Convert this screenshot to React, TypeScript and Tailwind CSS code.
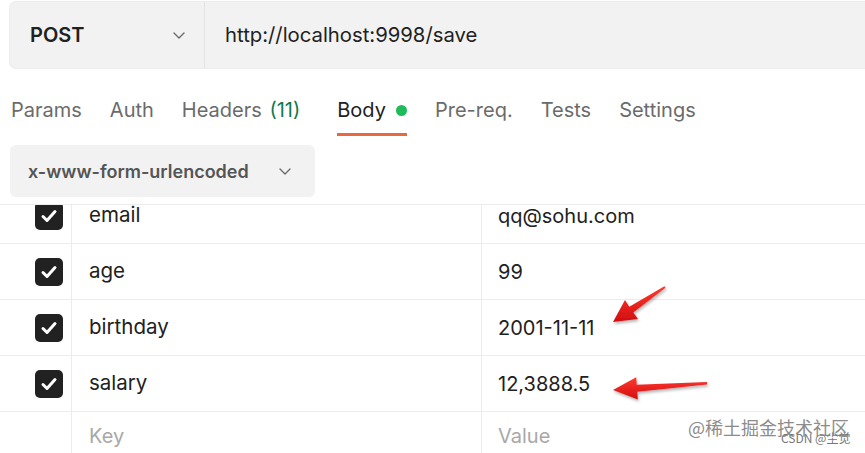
const rows = [
  { key: 'email', value: 'qq@sohu.com' },
  { key: 'age', value: '99' },
  { key: 'birthday', value: '2001-11-11' },
  { key: 'salary', value: '12,3888.5' },
]

const tabs = ['Params', 'Auth', 'Headers', 'Body', 'Pre-req.', 'Tests', 'Settings']

const Chevron = ({ className }: { className?: string }) => (
  <svg className={className} width="16" height="16" viewBox="0 0 16 16" fill="none">
    <path d="M3 6l5 5 5-5" stroke="#6b6b6b" strokeWidth="1.4" strokeLinecap="round" strokeLinejoin="round" />
  </svg>
)

const Checkbox = () => (
  <div className="w-[28px] h-[28px] rounded-[5px] bg-[#212121] flex items-center justify-center">
    <svg width="20" height="20" viewBox="0 0 20 20" fill="none">
      <path d="M4 10.5l4 4 8-9" stroke="#fff" strokeWidth="3" strokeLinecap="round" strokeLinejoin="round" />
    </svg>
  </div>
)

const Arrows = () => (
  <svg className="absolute inset-0 pointer-events-none" width="865" height="453">
    <defs>
      <linearGradient id="red" x1="0" y1="0" x2="0" y2="1">
        <stop offset="0" stopColor="#ff3a30" />
        <stop offset="1" stopColor="#d10d0d" />
      </linearGradient>
      <filter id="sh" x="-20%" y="-20%" width="140%" height="140%">
        <feDropShadow dx="1" dy="2" stdDeviation="1.5" floodColor="#000" floodOpacity="0.3" />
      </filter>
    </defs>
    <polygon
      points="613,322 625,300 629.3,306.8 664.4,286.2 665.6,287.8 633.3,312.6 638,319"
      fill="url(#red)"
      filter="url(#sh)"
    />
    <polygon
      points="613,390 636.2,377.2 636.7,384.7 707,382 707,384.5 637.3,391.7 637.8,399.5"
      fill="url(#red)"
      filter="url(#sh)"
    />
  </svg>
)

export default function App() {
  return (
    <div className="relative w-[865px] h-[453px] overflow-hidden bg-white font-['Inter','Liberation_Sans',sans-serif] text-[#212121]">
      {/* request bar */}
      <div className="pt-[2px] pl-[10px]">
        <div className="flex h-[66px] bg-[#f2f2f2] rounded-l-[6px] shadow-[0_0_0_1px_#ececec]">
          <div className="w-[195px] flex items-center justify-between pl-[20px] pr-[17px] border-r border-[#e2e2e2]">
            <span className="text-[20px] font-semibold">POST</span>
            <Chevron />
          </div>
          <div className="flex items-center pl-[20px] text-[20.3px]">http://localhost:9998/save</div>
        </div>
      </div>

      {/* tabs */}
      <div className="flex gap-[28px] pl-[11px] mt-[28px]">
        {tabs.map((t) => (
          <div key={t} className="flex flex-col">
            <div className="h-[28px] flex items-center text-[20px] leading-[28px]">
              {t === 'Headers' ? (
                <span className="text-[#6b6b6b] mr-[9px]">
                  Headers <span className="text-[#0f7b4a] ml-[2px]">(11)</span>
                </span>
              ) : t === 'Body' ? (
                <span className="flex items-center">
                  Body
                  <span className="ml-[10px] w-[11px] h-[11px] rounded-full bg-[#1fba5b]" />
                </span>
              ) : (
                <span className="text-[#6b6b6b]">{t}</span>
              )}
            </div>
            <div className={'mt-[9px] h-[3px] ' + (t === 'Body' ? 'bg-[#e8693f]' : '')} />
          </div>
        ))}
      </div>

      {/* body type */}
      <div className="pl-[10px] mt-[9px]">
        <div className="w-[305px] h-[52px] bg-[#f2f2f2] rounded-[6px] flex items-center justify-between pl-[18px] pr-[22px]">
          <span className="text-[18px] font-semibold text-[#555]">x-www-form-urlencoded</span>
          <Chevron />
        </div>
      </div>

      {/* params table */}
      <div className="mt-[7px] h-[249px] overflow-hidden border-t border-[#ececec]">
        <div className="-mt-[17px]">
          {rows.map((r) => (
            <div key={r.key} className="flex h-[56px] border-b border-[#ececec] text-[20px]">
              <div className="w-[72px] border-r border-[#ececec] flex items-center pl-[35px]">
                <Checkbox />
              </div>
              <div className="w-[410px] border-r border-[#ececec] flex items-center pl-[17px] text-[20.5px]">{r.key}</div>
              <div className="flex-1 flex items-center pl-[16px]">{r.value}</div>
            </div>
          ))}
          <div className="flex h-[56px] text-[20px] text-[#a8a8a8]">
            <div className="w-[72px] border-r border-[#ececec]" />
            <div className="w-[410px] border-r border-[#ececec] flex items-center pl-[17px] -mt-[8px]">Key</div>
            <div className="flex-1 flex items-center pl-[16px] -mt-[8px]">Value</div>
          </div>
        </div>
      </div>

      <Arrows />

      {/* watermark */}
      <div className="absolute left-[688px] top-[414px] text-[18px] leading-[26px] text-[#8c8c8c] font-['Noto_Sans_CJK_SC',sans-serif] [text-shadow:0_0_2px_#fff]">
        @稀土掘金技术社区
      </div>
      <div className="absolute left-[781px] top-[430px] text-[12px] leading-[16px] text-[#777] font-['Noto_Sans_CJK_SC',sans-serif]">
        CSDN @尘觉
      </div>
    </div>
  )
}
